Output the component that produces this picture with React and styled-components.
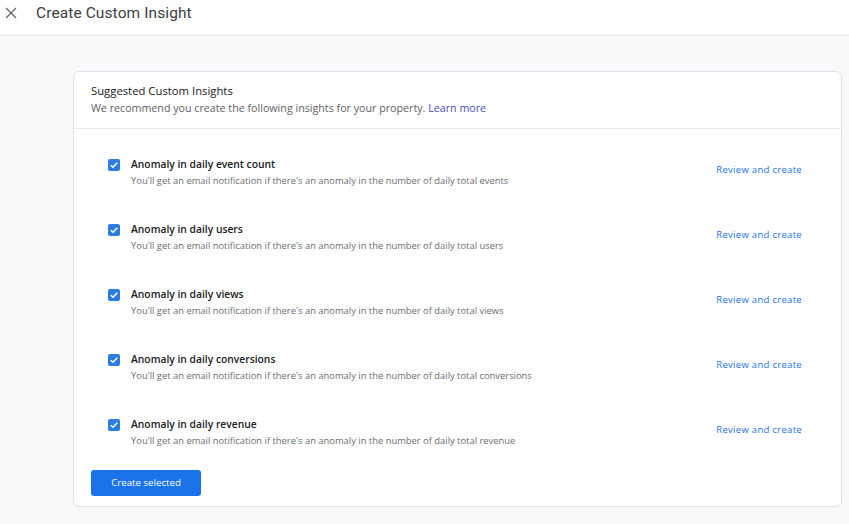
import React from "react";
import styled, { createGlobalStyle } from "styled-components";

const GlobalStyle = createGlobalStyle`
  body {
    margin: 0;
    background: #f8f9fa;
    font-family: "Open Sans", "Liberation Sans", sans-serif;
  }
`;

const insights = [
  ["Anomaly in daily event count", "events"],
  ["Anomaly in daily users", "users"],
  ["Anomaly in daily views", "views"],
  ["Anomaly in daily conversions", "conversions"],
  ["Anomaly in daily revenue", "revenue"],
];

export default function App() {
  return (
    <>
      <GlobalStyle />
      <Page>
        <TopBar>
          <CloseButton aria-label="close">
            <svg width="12" height="12" viewBox="0 0 12 12">
              <path d="M1 1L11 11M11 1L1 11" stroke="#5f6368" strokeWidth="1.2" />
            </svg>
          </CloseButton>
          <PageTitle>Create Custom Insight</PageTitle>
        </TopBar>
        <Content>
          <Card>
            <CardHeader>
              <CardTitle>Suggested Custom Insights</CardTitle>
              <CardSubtitle>
                We recommend you create the following insights for your property.{" "}
                <LearnMore href="#">Learn more</LearnMore>
              </CardSubtitle>
            </CardHeader>
            <List>
              {insights.map(([title, metric]) => (
                <Row key={metric}>
                  <Check>
                    <svg width="10" height="10" viewBox="0 0 10 10">
                      <path d="M1.8 5.2L4 7.3L8.3 2.8" stroke="#fff" strokeWidth="1.5" fill="none" />
                    </svg>
                  </Check>
                  <RowText>
                    <RowTitle>{title}</RowTitle>
                    <RowDesc>
                      You'll get an email notification if there's an anomaly in the number of daily total {metric}
                    </RowDesc>
                  </RowText>
                  <ReviewLink href="#">Review and create</ReviewLink>
                </Row>
              ))}
            </List>
            <Footer>
              <PrimaryButton>Create selected</PrimaryButton>
            </Footer>
          </Card>
        </Content>
      </Page>
    </>
  );
}

const Page = styled.div`
  width: 849px;
  height: 524px;
  overflow: hidden;
  display: flex;
  flex-direction: column;
`;

const TopBar = styled.div`
  height: 36px;
  flex-shrink: 0;
  background: #ffffff;
  border-bottom: 1px solid #e3e5e8;
  display: flex;
  align-items: center;
  padding-bottom: 9px;
  box-sizing: border-box;
`;

const CloseButton = styled.div`
  width: 36px;
  display: flex;
  justify-content: center;
  box-sizing: border-box;
  margin-left: -7px;
  margin-right: 7px;
`;

const PageTitle = styled.div`
  font-family: Roboto, "Liberation Sans", sans-serif;
  font-size: 15.5px;
  color: #3c4043;
  letter-spacing: 0.1px;
`;

const Content = styled.div`
  flex: 1;
  padding: 35px 7px 0 73px;
`;

const Card = styled.div`
  background: #ffffff;
  border: 1px solid #e1e3e6;
  border-radius: 6px;
  height: 436px;
  box-sizing: border-box;
  display: flex;
  flex-direction: column;
`;

const CardHeader = styled.div`
  padding: 11px 17px 12px;
  border-bottom: 1px solid #e8eaed;
`;

const CardTitle = styled.div`
  font-size: 11.3px;
  color: #202124;
  line-height: 16px;
`;

const CardSubtitle = styled.div`
  font-size: 10.7px;
  color: #5f6368;
  line-height: 16px;
  margin-top: 1px;
`;

const LearnMore = styled.a`
  color: #4a4fc0;
  text-decoration: none;
`;

const List = styled.div`
  padding: 27px 39px 0 34px;
  display: flex;
  flex-direction: column;
  gap: 33px;
`;

const Row = styled.div`
  display: flex;
  align-items: flex-start;
  height: 32px;
`;

const Check = styled.div`
  width: 12px;
  height: 12px;
  border-radius: 2px;
  background: #2a7de1;
  display: flex;
  align-items: center;
  justify-content: center;
  margin-top: 3px;
  margin-right: 11px;
  flex-shrink: 0;
`;

const RowText = styled.div`
  flex: 1;
  display: flex;
  flex-direction: column;
`;

const RowTitle = styled.div`
  font-size: 10.3px;
  font-weight: 600;
  color: #202124;
  line-height: 16px;
`;

const RowDesc = styled.div`
  font-size: 9.4px;
  color: #6b6f74;
  line-height: 14px;
  margin-top: 2px;
`;

const ReviewLink = styled.a`
  font-size: 9.5px;
  letter-spacing: 0.3px;
  color: #1a73e8;
  text-decoration: none;
  margin-top: 7px;
`;

const Footer = styled.div`
  padding: 21px 17px 0;
`;

const PrimaryButton = styled.button`
  width: 110px;
  height: 26px;
  border: none;
  border-radius: 3px;
  background: #1a73e8;
  color: #ffffff;
  font-family: "Open Sans", "Liberation Sans", sans-serif;
  font-size: 9.7px;
  font-weight: 500;
  cursor: pointer;
`;
